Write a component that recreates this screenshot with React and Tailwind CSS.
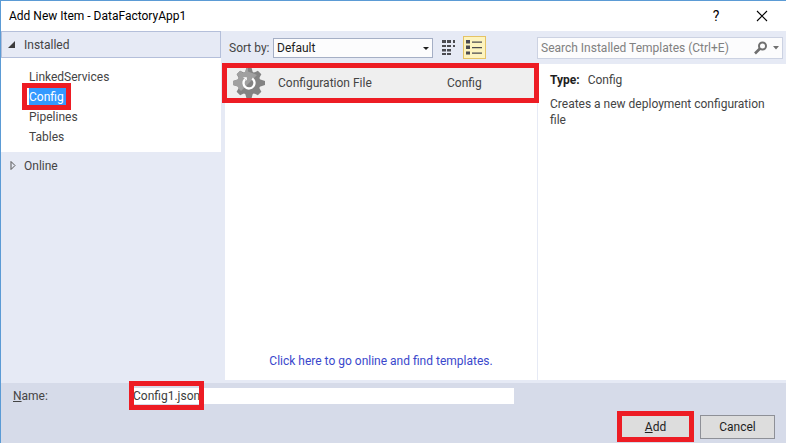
import React from "react";

function Highlight({ className }) {
  return (
    <span
      aria-hidden="true"
      className={`pointer-events-none absolute z-10 border-5 border-[#ed1c24] ${className}`}
    />
  );
}

function TitleBar() {
  return (
    <header className="flex h-[30px] shrink-0 items-center bg-white pl-2 pr-[18px] text-black">
      <h1 className="flex-1 text-[12px] leading-4">Add New Item - DataFactoryApp1</h1>
      <button type="button" aria-label="Help" className="mr-[34px] w-3 text-[14px] leading-4">
        ?
      </button>
      <button type="button" aria-label="Close">
        <svg width="12" height="12" viewBox="0 0 12 12" stroke="#000" strokeWidth="1.1">
          <path d="M1 1 11 11M11 1 1 11" />
        </svg>
      </button>
    </header>
  );
}

function Sidebar() {
  return (
    <nav className="w-[224px] shrink-0 pr-1">
      <button
        type="button"
        className="flex h-[27px] w-full items-center gap-[9px] border border-[#b4bfda] bg-[#e6eaf5] pl-[6px] text-left"
      >
        <svg width="7" height="7" viewBox="0 0 7 7" fill="#3c3c3c">
          <path d="M7 0V7H0Z" />
        </svg>
        Installed
      </button>
      <ul className="bg-white pb-[5px] pl-7 pt-[9px] leading-5">
        <li className="h-5"><a href="#linked">LinkedServices</a></li>
        <li className="flex h-5 items-center">
          <a href="#config" className="relative block h-[18px] w-[39px] bg-[#3399ff] leading-[18px] text-white">
            Config
            <Highlight className="-left-[7px] -top-[5px] h-[27px] w-[49px]" />
          </a>
        </li>
        <li className="h-5"><a href="#pipelines">Pipelines</a></li>
        <li className="h-5"><a href="#tables">Tables</a></li>
      </ul>
      <button type="button" className="flex h-[27px] w-full items-center gap-[7px] pl-[9px] text-left">
        <svg width="7" height="9" viewBox="0 0 7 9" fill="none" stroke="#555">
          <path d="M1 .500 5 4.500 1 8.500Z" />
        </svg>
        Online
      </button>
    </nav>
  );
}

function Toolbar() {
  return (
    <div className="flex h-[33px] items-center pl-1">
      <label htmlFor="sort" className="mr-1 w-10 whitespace-nowrap">Sort by:</label>
      <div className="relative w-40">
        <select
          id="sort"
          className="block h-5 w-full appearance-none border border-[#a5afc5] bg-[#fcfcfd] pl-[3px] leading-4 text-[#1e1e1e]"
        >
          <option>Default</option>
        </select>
        <svg className="pointer-events-none absolute right-1 top-[9px]" width="6" height="3" viewBox="0 0 6 3" fill="#1e1e1e">
          <path d="M0 0H6L3 3Z" />
        </svg>
      </div>
      <button type="button" aria-label="Small icons" className="ml-[9px]">
        <svg width="14" height="16" viewBox="0 0 14 16" fill="#4b4b50">
          <path d="M0 0h4v3H0zM5 0h4v3H5zM11 0h2v3h-2zM0 5h4v2H0zM5 5h4v2H5zM11 5h2v2h-2zM0 9h4v2.500H0zM5 9h4v2.500H5zM0 13h4v2H0zM5 13h4v2H5z" />
        </svg>
      </button>
      <button
        type="button"
        aria-label="List view"
        className="ml-[7px] flex h-[23px] w-[23px] items-center justify-center border border-[#e5c365] bg-[#fdf4bf]"
      >
        <svg width="17" height="15" viewBox="0 0 17 15" fill="#4b4b50">
          <path d="M0 0h4v3.500H0zM0 5.500h4v3.500H0zM0 11.500h4v3H0zM6 1.500h10v1.200H6zM6 7h10v1.200H6zM6 12.500h10v1.200H6z" />
        </svg>
      </button>
    </div>
  );
}

function GearIcon() {
  return (
    <svg width="34" height="32" viewBox="-17 -16 34 32" aria-hidden="true">
      <g fill="#838383">
        <circle r="11.500" />
        <path d="M-4-10-2.500-15.500H2.500L4-10ZM-4 10-2.500 15.500H2.500L4 10ZM-10-4-16-2V2L-10 4ZM10-4 16-2V2L10 4Z" />
        <path transform="rotate(45)" d="M-4-10-2.500-15H2.500L4-10ZM-4 10-2.500 15H2.500L4 10ZM-10-4-15-2.500V2.500L-10 4ZM10-4 15-2.500V2.500L10 4Z" />
      </g>
      <path d="M-16-2V2L-11.500 3.200-10 6-8 8 8-8-1-11.500-1-15.500H-2.500L-4-11-6-10-8.800-12.300-12.300-8.800-10.200-6-11.200-3.500Z" fill="#a0a0a0" />
      <path d="M-4-3.800A5.500 5.500 0 1 0 3.200-4.500" fill="none" stroke="#fff" strokeWidth="2.300" />
      <path d="M-6-5.800H-2.200V-2.500Z" fill="#fff" />
    </svg>
  );
}

function TemplateList() {
  return (
    <section className="flex w-[312px] shrink-0 flex-col">
      <Toolbar />
      <div className="flex flex-1 flex-col bg-white">
        <button type="button" className="relative flex h-[38px] items-center bg-[#efefef] pl-[7px] text-left">
          <GearIcon />
          <span className="ml-3 w-[169px]">Configuration File</span>
          <span>Config</span>
          <Highlight className="-bottom-px -left-[3px] -right-[2px] -top-px" />
        </button>
        <a href="#online" className="mb-[11px] mt-auto self-center leading-4 text-[#3a48cc]">
          Click here to go online and find templates.
        </a>
      </div>
    </section>
  );
}

function Details() {
  return (
    <section className="flex min-w-0 flex-1 flex-col">
      <div className="flex h-[33px] items-center pr-[3px]">
        <div className="flex h-[22px] w-full items-center border border-[#ccd2e2] bg-[#fcfcfd] pr-[3px]">
          <input
            type="search"
            aria-label="Search Installed Templates"
            placeholder="Search Installed Templates (Ctrl+E)"
            className="h-full min-w-0 flex-1 bg-transparent pl-[3px] placeholder:text-[#808080]"
          />
          <svg width="14" height="14" viewBox="0 0 14 14" fill="none" stroke="#707070" strokeWidth="2">
            <circle cx="8.500" cy="5" r="3.500" />
            <path d="M6 7.500 1 12.500" strokeWidth="2.600" />
          </svg>
          <svg className="ml-[5px]" width="6" height="4" viewBox="0 0 6 4" fill="#707070">
            <path d="M0 0H6L3 3.500Z" />
          </svg>
        </div>
      </div>
      <div className="flex-1 border-l border-[#e6eaf5] bg-white pl-3 pr-2 pt-2 leading-4">
        <p><strong className="mr-2 font-bold text-[#1e1e1e]">Type:</strong>Config</p>
        <p className="mt-2">Creates a new deployment configuration file</p>
      </div>
    </section>
  );
}

function Footer() {
  return (
    <footer className="shrink-0 border-t-3 border-[#e6eaf5] bg-[#d6dbe9] pb-1 pl-3 pr-[11px] pt-[5px]">
      <div className="flex items-center">
        <label htmlFor="name" className="w-[120px] leading-4"><u>N</u>ame:</label>
        <div className="relative">
          <input
            id="name"
            defaultValue="Config1.json"
            className="block h-4 w-[381px] bg-white text-[#3c3c3c]"
          />
          <Highlight className="-left-1 -top-[7px] h-[29px] w-[75px]" />
        </div>
      </div>
      <div className="mt-[11px] flex justify-end gap-[7px]">
        <button type="submit" className="relative h-6 w-[75px] border border-[#acacac] bg-[#dddddd] text-[#1e1e1e]">
          <u>A</u>dd
          <Highlight className="-bottom-1 -left-[2px] -right-[2px] -top-[5px]" />
        </button>
        <button type="button" className="h-6 w-[75px] border border-[#8e9097] bg-[#dddddd] text-[#1e1e1e]">
          Cancel
        </button>
      </div>
    </footer>
  );
}

export default function App() {
  return (
    <div className="flex min-h-screen flex-col border-l border-t border-[#5b9bd5] bg-[#e6eaf5] font-[Roboto,sans-serif] text-[12px] text-[#444444]">
      <TitleBar />
      <main className="flex flex-1">
        <Sidebar />
        <TemplateList />
        <Details />
      </main>
      <Footer />
    </div>
  );
}
